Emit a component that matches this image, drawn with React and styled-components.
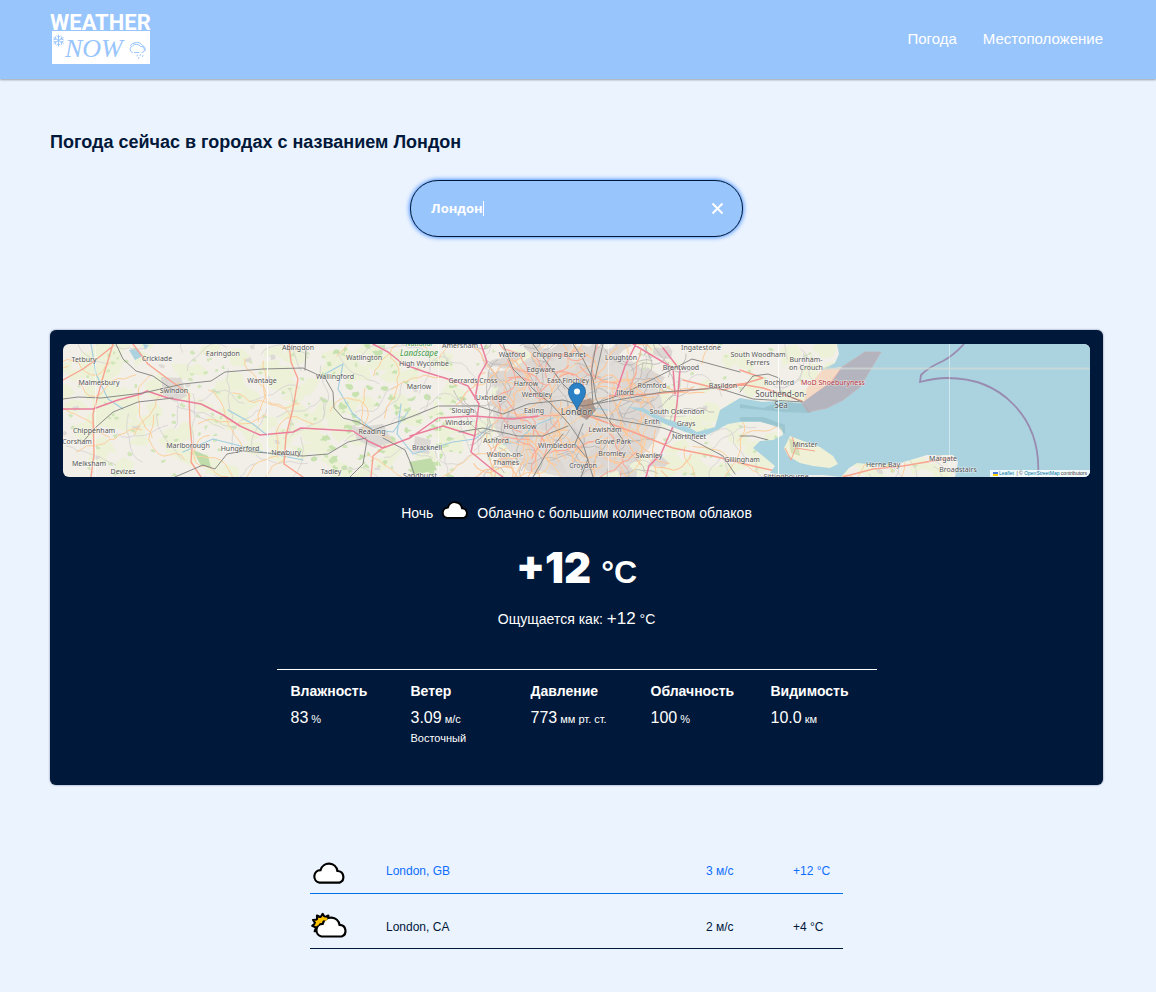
import React from "react";
import styled, { createGlobalStyle } from "styled-components";

const colors = {
  page: "#ebf3ff",
  sky: "#99c5fd",
  navy: "#001839",
  link: "#0d6efd",
  line: "#0071ea",
};

const GlobalStyle = createGlobalStyle`
  *, *::before, *::after { box-sizing: border-box; }
  body {
    margin: 0;
    background: ${colors.page};
    color: ${colors.navy};
    font-family: "Liberation Sans", Arial, sans-serif;
  }
  h1, p, dl, dd { margin: 0; }
  a { color: inherit; text-decoration: none; }
`;

const Header = styled.header`
  display: flex;
  align-items: center;
  justify-content: space-between;
  height: 79px;
  padding: 0 53px 2px 50px;
  background: ${colors.sky};
  box-shadow: 0 1px 2px rgba(0, 0, 0, 0.35);
`;

const LogoLink = styled.a`
  display: block;
  svg { display: block; overflow: visible; }
`;

const Nav = styled.nav`
  display: flex;
  gap: 26px;
`;

const NavLink = styled.a`
  color: #fff;
  font-size: 15px;
  line-height: 20px;
`;

const Main = styled.main`
  padding: 52px 53px 40px 50px;
`;

const Title = styled.h1`
  font-size: 18px;
  line-height: 22px;
  font-weight: 700;
`;

const SearchForm = styled.form`
  display: flex;
  align-items: center;
  width: 333px;
  max-width: 100%;
  height: 57px;
  margin: 27px auto 0;
  padding: 0 18px 0 20px;
  border: 1px solid ${colors.navy};
  border-radius: 28px;
  background: ${colors.sky};
  box-shadow: 0 0 5px ${colors.link};
`;

const SearchInput = styled.input`
  field-sizing: content;
  max-width: 240px;
  padding: 0 0 2px;
  border: 0;
  outline: 0;
  background: transparent;
  color: #fff;
  caret-color: transparent;
  font-family: "Open Sans", "Noto Sans", sans-serif;
  font-size: 13px;
  font-weight: 700;
`;

const Caret = styled.span`
  width: 1px;
  height: 15px;
  background: #fff;
`;

const ClearButton = styled.button`
  display: flex;
  margin-left: auto;
  padding: 0;
  border: 0;
  background: none;
  color: #fff;
  cursor: pointer;
`;

const Card = styled.section`
  display: flex;
  flex-direction: column;
  align-items: center;
  margin-top: 93px;
  padding: 14px 13px 38px;
  border-radius: 6px;
  background: ${colors.navy};
  color: #fff;
  box-shadow: 0 0 2px rgba(0, 24, 57, 0.6);
`;

const MapFrame = styled.div`
  position: relative;
  width: 100%;
  height: 133px;
  border-radius: 6px;
  overflow: hidden;
  > svg { display: block; width: 100%; height: 100%; }
`;

const Attribution = styled.div`
  position: absolute;
  right: 0;
  bottom: 0;
  display: flex;
  align-items: center;
  gap: 1px;
  height: 7px;
  padding: 0 3px;
  background: rgba(255, 255, 255, 0.85);
  color: #444;
  font-size: 5px;
  line-height: 7px;
  white-space: pre;
  a { color: #0078a8; }
`;

const Condition = styled.p`
  display: flex;
  align-items: center;
  gap: 8px;
  margin-top: 22px;
  font-size: 14px;
  line-height: 28px;
  svg { margin-bottom: 6px; }
`;

const Temperature = styled.p`
  display: flex;
  align-items: baseline;
  gap: 10px;
  margin-top: 15px;
  font-family: Inter, "Liberation Sans", sans-serif;
  font-size: 42px;
  line-height: 52px;
  font-weight: 900;
`;

const TemperatureUnit = styled.span`
  font-family: "Liberation Sans", Arial, sans-serif;
  font-size: 32px;
  font-weight: 700;
`;

const FeelsLike = styled.p`
  margin-top: 9px;
  font-size: 14px;
  line-height: 24px;
`;

const FeelsValue = styled.span`
  font-size: 17px;
`;

const Metrics = styled.dl`
  display: grid;
  grid-template-columns: repeat(5, 1fr);
  width: 600px;
  max-width: 100%;
  margin-top: 38px;
  padding-top: 11px;
  border-top: 1px solid #fff;
`;

const Metric = styled.div`
  padding: 0 14px;
  white-space: nowrap;
`;

const MetricName = styled.dt`
  font-size: 14px;
  line-height: 20px;
  font-weight: 700;
`;

const MetricValue = styled.dd`
  margin-top: 7px;
  font-size: 16px;
  line-height: 20px;
`;

const Unit = styled.span`
  font-size: 11px;
`;

const MetricNote = styled.dd`
  font-size: 11px;
  line-height: 18px;
`;

const Cities = styled.table`
  width: 533px;
  max-width: 100%;
  margin: 53px auto 0;
  border-collapse: collapse;
  table-layout: fixed;
`;

const CityRow = styled.tr`
  height: 55px;
  color: ${(p) => (p.$active ? colors.link : colors.navy)};
  border-bottom: 1px solid ${(p) => (p.$active ? colors.line : colors.navy)};
`;

const CityCell = styled.td`
  width: ${(p) => p.$width || "auto"};
  padding: 12px 0 0;
  font-size: 12px;
  line-height: 20px;
  white-space: nowrap;
  svg { display: block; }
`;

const CLOUD = "M7 19A6 6 0 0 1 8 7.1A8.2 8.2 0 0 1 24 8A5.7 5.7 0 0 1 26 19Z";

function CloudIcon({ width = 38, height = 30, box = "-2 -6 36 28" }) {
  return (
    <svg width={width} height={height} viewBox={box} aria-hidden="true">
      <path d={CLOUD} fill="#fff" stroke="#000" strokeWidth="2.1" />
    </svg>
  );
}

function starPoints(cx, cy, outer, inner, count) {
  return Array.from({ length: count * 2 }, (_, i) => {
    const r = i % 2 ? inner : outer;
    const a = (Math.PI * i) / count;
    return `${(cx + r * Math.sin(a)).toFixed(2)},${(cy - r * Math.cos(a)).toFixed(2)}`;
  }).join(" ");
}

function SunCloudIcon() {
  return (
    <svg width="38" height="30" viewBox="-4 -4 36 28" aria-hidden="true">
      <polygon
        points={starPoints(8, 7.5, 10, 7, 11)}
        fill="#ffc300"
        stroke="#000"
        strokeWidth="2"
        strokeLinejoin="round"
      />
      <path d={CLOUD} fill="#fff" stroke="#000" strokeWidth="2.1" />
      <path d="M2.500 8.500A6.500 6.500 0 0 1 12 3" fill="none" stroke="#ffc300" strokeWidth="3" />
    </svg>
  );
}

function Logo() {
  return (
    <svg width="100" height="52" viewBox="0 0 100 52" role="img" aria-label="Weather Now">
      <text x="0" y="17" fontFamily="Roboto, sans-serif" fontWeight="700" fontSize="22" fill="#fff">
        WEATHER
      </text>
      <rect x="2" y="18" width="98" height="33" fill="#fff" />
      <g stroke={colors.sky} fill="none" strokeLinecap="round">
        <path
          d="M8.500 22V33M3.700 24.700L13.300 30.300M13.300 24.700L3.700 30.300M6.800 23L8.500 24.700L10.200 23M6.800 32L8.500 30.300L10.200 32M3.800 26.600L5.900 26L5.500 23.800M13.200 28.400L11.100 29L11.500 31.200M13.200 26.600L11.100 26L11.500 23.800M3.800 28.400L5.900 29L5.500 31.200"
          strokeWidth="1"
        />
        <path
          d="M82.500 39.500A3.400 3.400 0 0 1 82.500 33A5 5 0 0 1 90.500 33.500A3 3 0 0 1 92 39.500M84.500 39.500H89M80.500 32.500A4.500 4.500 0 0 1 84.500 30M84.500 30A6 6 0 0 1 92.500 32.500A4 4 0 0 1 95 38M87.500 42L87 43M90.500 41.500L90 42.500M93 42.500L92.500 43.500M89 44.500L88.500 45.500"
          strokeWidth="1"
        />
      </g>
      <text
        x="15"
        y="44"
        fontFamily='"Liberation Serif", serif'
        fontStyle="italic"
        fontSize="26"
        fill={colors.sky}
      >
        NOW
      </text>
    </svg>
  );
}

const SEA =
  "M774 0L776 10L772 19L759 26L779 23L768 36L739 59L715 57L700 58L677 54L657 66L652 83L634 88L620 80L600 74L580 64L564 63L580 68L602 80L622 88L640 93L652 87L665 80L677 78L697 78L719 83L720 91L710 96L697 97L690 104L700 112L712 122L707 129L722 131L760 131L778 133L786 124L794 119L815 121L837 119L864 111L890 111L895 118L892 133H1027V0Z";
const ISLAND = "M727 92L740 97L757 103L770 112L775 120L767 124L750 122L737 119L725 112L721 104Z";

const MOTORWAYS = [
  "M0 65L30 65L55 56L78 50L84 47L105 54L138 60L160 71L177 82L197 91L230 88L238 84L290 87L305 97L320 104L347 94L375 74L410 72L450 75L475 72",
  "M310 0L325 8L340 20L362 28L395 38L405 42L416 60L412 90L408 108L430 126L440 133",
  "M418 0L424 18L416 32L412 55",
  "M573 0L562 22L556 40L552 52",
  "M600 4L617 26L614 60L611 80L598 110L586 122L583 133",
  "M570 0L610 24L612 50",
  "M412 92L380 82L347 92",
];

const TRUNKS = [
  "M50 0L40 33L30 70L31 110L28 133",
  "M70 0L85 20L105 35L126 50L127 80L129 103L128 118L138 133",
  "M226 0L228 18L235 35L230 64L223 92L221 120L240 133",
  "M0 36L20 25L35 14L50 2",
  "M545 52L590 50L640 45L677 40L700 44L739 57",
  "M620 36L660 46L700 34L677 26",
  "M520 70L570 88L610 104L650 112L690 122L730 131",
  "M720 131L728 115L733 103L727 95",
  "M780 133L810 125L840 122L875 116L890 114",
  "M308 133L310 112L322 102",
];

const RAILWAYS = [
  "M0 55L15 53L38 54L80 49L120 40L148 37L162 28L200 25L240 24L262 34L270 48L271 64L280 74L295 78L310 86L340 76L375 62L415 62L440 70L465 60L500 56L520 62",
  "M53 0L60 15L73 27L90 32L110 46",
  "M18 100L32 84L50 68L75 58L110 54",
  "M112 133L140 121L152 125L164 110L180 107L240 112L265 110L285 98L303 94",
  "M287 133L300 120L304 96",
  "M320 94L342 106L348 120L352 133",
  "M243 5L242 26",
  "M440 0L450 25L470 45L488 60L506 80L520 100L530 133",
  "M470 0L485 20L500 40L515 55",
  "M510 0L520 15L530 35L533 55L545 75L560 96",
  "M533 0L528 30L530 60",
  "M540 0L532 35",
  "M520 62L560 55L600 48L655 44L690 55L740 58",
  "M530 60L560 50L600 30L629 15L677 28",
  "M520 70L560 77L600 84L622 92L660 112L672 130",
  "M505 82L480 92L455 92L420 84L396 88",
  "M500 90L482 112L470 133",
  "M520 80L512 100L525 115L518 133",
  "M677 48L690 32L705 30L716 34L717 48L739 58",
  "M677 92L690 92L705 96",
];

const RIVERS = [
  "M28 0L33 30L45 55L60 65",
  "M262 30L280 20L275 45L290 70L310 86L330 88L345 68",
  "M120 108L150 95L170 100L200 108L240 116",
  "M165 66L190 80L205 92",
  "M338 60L334 90L350 110L390 98L412 95L430 80",
  "M545 66L530 64L500 70L470 82L455 98L440 100",
];

const LABELS = [
  ["Tetbury", 21, 18], ["Cricklade", 94, 17], ["Faringdon", 160, 12], ["Abingdon", 235, 6],
  ["Watlington", 301, 16], ["Malmesbury", 36, 41], ["Swindon", 111, 49], ["Wantage", 199, 39],
  ["Wallingford", 272, 35], ["Chippenham", 31, 89], ["Corsham", 14, 100], ["Marlborough", 125, 104],
  ["Hungerford", 177, 107], ["Newbury", 223, 111], ["Reading", 309, 90], ["Melksham", 26, 122],
  ["Devizes", 60, 130], ["Tadley", 268, 130], ["Amersham", 397, 4], ["Watford", 449, 13],
  ["Chipping Barnet", 496, 13], ["Edgware", 478, 28], ["Loughton", 558, 16], ["Ingatestone", 638, 6],
  ["Brentwood", 618, 26], ["High Wycombe", 361, 22], ["Marlow", 356, 45], ["Gerrards Cross", 410, 39],
  ["Harrow", 463, 42], ["East Finchley", 505, 39], ["Romford", 589, 44], ["Basildon", 660, 44],
  ["Wembley", 474, 53], ["Ilford", 562, 51], ["Uxbridge", 428, 56], ["Slough", 400, 69],
  ["Ealing", 471, 69], ["South Ockendon", 614, 70], ["Windsor", 396, 81], ["Hounslow", 457, 85],
  ["Erith", 589, 80], ["Grays", 623, 82], ["Lewisham", 542, 88], ["Ashford", 433, 99],
  ["Wimbledon", 494, 104], ["Grove Park", 550, 100], ["Northfleet", 626, 95], ["Bracknell", 364, 106],
  ["Walton-on-", 442, 113], ["Thames", 443, 121], ["Bromley", 549, 112], ["Swanley", 586, 114],
  ["Croydon", 520, 124], ["Sandhurst", 357, 134], ["Gillingham", 679, 118], ["South Woodham", 695, 13],
  ["Ferrers", 695, 21], ["Burnham-", 743, 18], ["on Crouch", 743, 26], ["Rochford", 716, 41],
  ["Minster", 742, 103], ["Herne Bay", 820, 123], ["Margate", 880, 117], ["Broadstairs", 895, 128],
  ["Sittingbourne", 723, 135],
];

// Small repeatable generator, so the minor roads and woods keep their places.
function createRandom(seed) {
  let s = seed;
  return () => {
    s = (s * 1664525 + 1013904223) % 4294967296;
    return s / 4294967296;
  };
}

function makeRoads(count, seed, x0, x1, steps, step) {
  const rnd = createRandom(seed);
  return Array.from({ length: count }, () => {
    let x = x0 + rnd() * (x1 - x0);
    let y = rnd() * 133;
    let a = rnd() * Math.PI * 2;
    let d = `M${x.toFixed(1)} ${y.toFixed(1)}`;
    for (let i = 0; i < steps; i += 1) {
      a += (rnd() - 0.5) * 1.3;
      x += Math.cos(a) * step;
      y += Math.sin(a) * step;
      d += `L${x.toFixed(1)} ${y.toFixed(1)}`;
    }
    return d;
  }).join("");
}

function makePatches(count, seed, x0, x1, size) {
  const rnd = createRandom(seed);
  return Array.from({ length: count }, () => {
    const x = x0 + rnd() * (x1 - x0);
    const y = rnd() * 133;
    const pts = Array.from({ length: 7 }, (_, i) => {
      const r = size * (0.3 + rnd());
      const a = (i / 7) * Math.PI * 2;
      return `${(x + r * Math.cos(a) * 1.3).toFixed(1)} ${(y + r * Math.sin(a)).toFixed(1)}`;
    });
    return `M${pts.join("L")}Z`;
  }).join("");
}

const MEADOWS = makePatches(260, 11, 0, 900, 10);
const WOODS = makePatches(260, 23, 0, 900, 2);
const CHILTERN_WOODS = makePatches(70, 37, 250, 400, 3);
const TOWNS = makePatches(40, 5, 0, 900, 3);
const SUBURBS = makePatches(60, 8, 430, 600, 9);
const LANES = makeRoads(90, 3, 0, 900, 9, 6);
const A_ROADS = makeRoads(55, 17, 0, 900, 12, 6);
const CITY_LANES = makeRoads(75, 29, 400, 620, 8, 5);
const CITY_A_ROADS = makeRoads(65, 41, 420, 600, 9, 5);
const CITY_TRUNKS = makeRoads(24, 53, 430, 590, 8, 6);

function LondonMap() {
  return (
    <svg viewBox="0 0 1027 133" preserveAspectRatio="xMidYMid slice" role="img" aria-label="Карта: Лондон">
      <rect width="1027" height="133" fill="#f2efe9" />
      <path d={MEADOWS} fill="#edf1d8" />
      <path d={TOWNS} fill="#dddad6" />
      <path d={WOODS} fill="#d0e5b9" />
      <path d={CHILTERN_WOODS} fill="#c8e2b1" />
      <path d="M98 33L118 34L124 52L112 58L100 50ZM290 84L320 80L330 98L312 104L294 96ZM352 92L368 96L366 110L350 108Z" fill="#dcd9d5" />
      <ellipse cx="515" cy="68" rx="85" ry="66" fill="#e0dcd7" />
      <path d={SUBURBS} fill="#dcd7d3" />
      <path d="M66 6L74 4L80 12L72 16ZM80 0L86 1L82 6Z" fill="#aad3df" />
      <path d="M130 106L145 112L148 124L138 122ZM346 118L368 114L374 126L350 131Z" fill="#bfdcaa" />
      <g fill="none" strokeLinejoin="round" strokeLinecap="round">
        <path d={LANES} stroke="#d5d2d2" strokeWidth="0.8" />
        <path d={RIVERS.join("")} stroke="#a3cfe0" strokeWidth="1.2" />
        <path d={CITY_LANES} stroke="#bab5b4" strokeWidth="0.8" />
        <path d={A_ROADS} stroke="#fbcf9c" strokeWidth="1" />
        <path d={CITY_A_ROADS} stroke="#fcc79b" strokeWidth="1.1" />
        <path d={CITY_TRUNKS} stroke="#f9ab98" strokeWidth="1.1" />
        <path d={TRUNKS.join("")} stroke="#f8a48f" strokeWidth="1.4" />
        <path d={MOTORWAYS.join("")} stroke="#ec7f9d" strokeWidth="1.5" />
        <path d={RAILWAYS.join("")} stroke="#8b8b89" strokeWidth="1" />
      </g>
      <path d="M515 58L528 54L533 66L524 76L514 70Z" fill="#8d7165" opacity="0.6" />
      <path d={SEA} fill="#aad3df" />
      <path d={ISLAND} fill="#f0f0d8" />
      <path d="M726 94L735 99L737 112L728 109Z" fill="#d8ddb4" />
      <path d="M729 93L733 103L728 116L722 104M733 104L752 107" fill="none" stroke="#f8a48f" />
      <path d="M677 60L700 64L718 58L740 60L748 69L720 68L700 66L677 64ZM677 73L700 73L722 81L722 90L716 84L697 77L677 77Z" fill="#8ebac2" opacity="0.55" />
      <path d="M759 26L779 23L770 37L741 57L744 44Z" fill="#f4d9c5" />
      <path d="M779 23L802 8L818 8L797 43L780 56L764 64L745 68L739 59L768 38Z" fill="#bb9ba2" opacity="0.55" stroke="#dd9a9d" strokeWidth="0.8" />
      <path d="M901 0Q890 12 880 17Q866 23 858 31L857 38Q872 34 884 34Q925 34 950 60Q978 88 975 133" fill="none" stroke="#998bb0" strokeWidth="1.8" />
      <g stroke="#fff">
        <path d="M204.500 0V133M715.500 0V133" opacity="0.85" />
        <path d="M32.500 0V133M375.500 0V133M545.500 0V133M886.500 0V133" opacity="0.45" />
        <path d="M760 24.500H1027" stroke="#d5dcd7" strokeWidth="2" opacity="0.7" />
      </g>
      <g
        fontFamily='"Noto Sans", sans-serif'
        fontSize="7"
        textAnchor="middle"
        fill="#555"
        stroke="#fff"
        strokeOpacity="0.55"
        strokeWidth="1.2"
        paintOrder="stroke"
      >
        {LABELS.map(([name, x, y]) => (
          <text key={name} x={x} y={y}>{name}</text>
        ))}
        <text x="514" y="71" fontSize="9">London</text>
        <text x="718" y="53" fontSize="8">Southend-on-</text>
        <text x="718" y="64" fontSize="8">Sea</text>
        <text x="770" y="41" fill="#b5313c">MoD Shoeburyness</text>
        <g fill="#3f9a45" fontStyle="italic">
          <text x="356" y="2">National</text>
          <text x="356" y="12" fontSize="8">Landscape</text>
        </g>
      </g>
      <path
        d="M514 66C511.500 58.500 505.500 54.500 505.500 47.500A8.500 8.500 0 0 1 522.500 47.500C522.500 54.500 516.500 58.500 514 66Z"
        fill="#2a81c6"
        stroke="#1f6296"
        strokeWidth="0.8"
      />
      <circle cx="514" cy="47.500" r="3" fill="#fff" />
    </svg>
  );
}

const metrics = [
  { name: "Влажность", value: "83", unit: "%" },
  { name: "Ветер", value: "3.09", unit: "м/с", note: "Восточный" },
  { name: "Давление", value: "773", unit: "мм рт. ст." },
  { name: "Облачность", value: "100", unit: "%" },
  { name: "Видимость", value: "10.0", unit: "км" },
];

const cities = [
  { name: "London, GB", wind: "3 м/с", temp: "+12 °C", Icon: CloudIcon, active: true },
  { name: "London, CA", wind: "2 м/с", temp: "+4 °C", Icon: SunCloudIcon },
];

export default function App() {
  const [query, setQuery] = React.useState("Лондон");
  return (
    <>
      <GlobalStyle />
      <Header>
        <LogoLink href="#"><Logo /></LogoLink>
        <Nav>
          <NavLink href="#weather">Погода</NavLink>
          <NavLink href="#location">Местоположение</NavLink>
        </Nav>
      </Header>
      <Main>
        <Title>Погода сейчас в городах с названием Лондон</Title>
        <SearchForm role="search" onSubmit={(e) => e.preventDefault()}>
          <SearchInput aria-label="Город" value={query} onChange={(e) => setQuery(e.target.value)} />
          <Caret />
          <ClearButton type="button" aria-label="Очистить" onClick={() => setQuery("")}>
            <svg width="13" height="13" viewBox="0 0 13 13" fill="none" stroke="currentColor" strokeWidth="2">
              <path d="M1.500 1.500L11.500 11.500M11.500 1.500L1.500 11.500" />
            </svg>
          </ClearButton>
        </SearchForm>

        <Card>
          <MapFrame>
            <LondonMap />
            <Attribution>
              <svg width="5" height="4" viewBox="0 0 5 4" aria-hidden="true">
                <rect width="5" height="2" fill="#4c7be1" />
                <rect y="2" width="5" height="2" fill="#ffd500" />
              </svg>
              <a href="#leaflet">Leaflet</a>
              <span> | © <a href="#osm">OpenStreetMap</a> contributors</span>
            </Attribution>
          </MapFrame>
          <Condition>
            Ночь
            <CloudIcon width={28} height={18} box="0 0 32 20" />
            Облачно с большим количеством облаков
          </Condition>
          <Temperature>
            +12<TemperatureUnit>°C</TemperatureUnit>
          </Temperature>
          <FeelsLike>
            Ощущается как: <FeelsValue>+12</FeelsValue> °C
          </FeelsLike>
          <Metrics>
            {metrics.map((m) => (
              <Metric key={m.name}>
                <MetricName>{m.name}</MetricName>
                <MetricValue>{m.value}<Unit> {m.unit}</Unit></MetricValue>
                {m.note && <MetricNote>{m.note}</MetricNote>}
              </Metric>
            ))}
          </Metrics>
        </Card>

        <Cities>
          <tbody>
            {cities.map(({ name, wind, temp, Icon, active }) => (
              <CityRow key={name} $active={active}>
                <CityCell $width="76px"><Icon /></CityCell>
                <CityCell><a href="#city">{name}</a></CityCell>
                <CityCell $width="87px">{wind}</CityCell>
                <CityCell $width="50px">{temp}</CityCell>
              </CityRow>
            ))}
          </tbody>
        </Cities>
      </Main>
    </>
  );
}
